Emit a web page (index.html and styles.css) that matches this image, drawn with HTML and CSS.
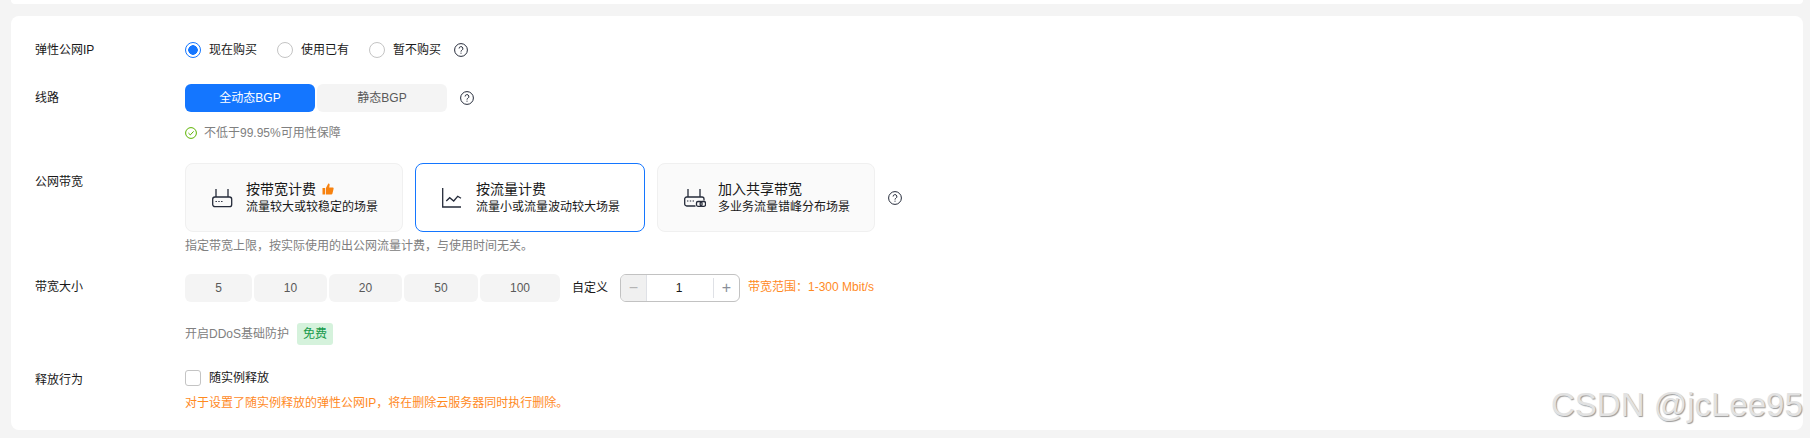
FILE: index.html
```html
<!DOCTYPE html>
<html lang="en">
<head>
    <meta charset="UTF-8">
    <title>弹性公网IP</title>
    <link rel="stylesheet" href="styles.css">
</head>
<body>
    <div class="top-card"></div>
    <div class="form-card">
        <div class="row row-ip">
            <div class="label">弹性公网IP</div>
            <div class="radio-group">
                <label class="radio checked"><span class="dot"></span>现在购买</label>
                <label class="radio"><span class="dot"></span>使用已有</label>
                <label class="radio"><span class="dot"></span>暂不购买</label>
                <svg class="help" viewBox="0 0 14 14"><circle cx="7" cy="7" r="6.4"/><path d="M5.1 5.5a1.9 1.9 0 1 1 2.8 1.7c-.6.3-.9.7-.9 1.4"/><path d="M7 9.7v1"/></svg>
            </div>
        </div>
        <div class="row row-line">
            <div class="label">线路</div>
            <div class="content">
                <div class="line-tabs">
                    <div class="line-tab active">全动态BGP</div>
                    <div class="line-tab">静态BGP</div>
                    <svg class="help line-help" viewBox="0 0 14 14"><circle cx="7" cy="7" r="6.4"/><path d="M5.1 5.5a1.9 1.9 0 1 1 2.8 1.7c-.6.3-.9.7-.9 1.4"/><path d="M7 9.7v1"/></svg>
                </div>
                <div class="tip">
                    <svg class="ok" viewBox="0 0 12 12"><circle cx="6" cy="6" r="5.4"/><path d="M3.4 6l1.9 1.9 3.3-3.5"/></svg>
                    不低于99.95%可用性保障
                </div>
            </div>
        </div>
        <div class="row row-billing">
            <div class="label">公网带宽</div>
            <div class="content">
                <div class="bill-cards">
                    <div class="bill-card">
                        <svg class="bill-icon" viewBox="0 0 22 20"><path d="M4 1v8M16 1v8"/><rect x="0.7" y="9" width="19" height="9.6" rx="2.2"/><path class="dots" d="M3.5 13.5h1.4M6.3 13.5h1.4M9.1 13.5h1.4"/></svg>
                        <div class="bill-text">
                            <div class="bill-title">按带宽计费<svg class="thumb" viewBox="0 0 12 12"><rect x="0.5" y="5" width="2.5" height="6.5"/><path d="M3.8 5.2 6.3.6c1-.2 1.5.6 1.3 1.6L7.2 4.4h3.4c.8 0 1.2.6 1 1.3l-1.2 5c-.2.6-.5.8-1.1.8H3.8z"/></svg></div>
                            <div class="bill-desc">流量较大或较稳定的场景</div>
                        </div>
                    </div>
                    <div class="bill-card selected">
                        <svg class="bill-icon" viewBox="0 0 22 20"><path d="M.7 0v19H19"/><path d="M4.3 13 7.7 9.7 11.7 13l4-4.7L19 10.3"/></svg>
                        <div class="bill-text">
                            <div class="bill-title">按流量计费</div>
                            <div class="bill-desc">流量小或流量波动较大场景</div>
                        </div>
                    </div>
                    <div class="bill-card">
                        <svg class="bill-icon" viewBox="0 0 22 20"><path d="M4 1v8M16 1v8"/><path d="M11.5 18H2.700a2 2 0 0 1-2-2v-5a2 2 0 0 1 2-2H18a2 2 0 0 1 2 2v1.5"/><path class="dots" d="M3 13h1.4M5.8 13h1.4M8.6 13h1.4"/><rect x="12.5" y="13.5" width="5.5" height="4.8" rx="1.5"/><rect x="16.2" y="13.5" width="5.3" height="4.8" rx="1.5"/></svg>
                        <div class="bill-text">
                            <div class="bill-title">加入共享带宽</div>
                            <div class="bill-desc">多业务流量错峰分布场景</div>
                        </div>
                    </div>
                    <svg class="help bill-help" viewBox="0 0 14 14"><circle cx="7" cy="7" r="6.4"/><path d="M5.1 5.5a1.9 1.9 0 1 1 2.8 1.7c-.6.3-.9.7-.9 1.4"/><path d="M7 9.7v1"/></svg>
                </div>
                <div class="hint">指定带宽上限，按实际使用的出公网流量计费，与使用时间无关。</div>
            </div>
        </div>
        <div class="row row-size">
            <div class="label">带宽大小</div>
            <div class="size-group">
                <div class="size size-5">5</div>
                <div class="size size-mid">10</div>
                <div class="size size-mid">20</div>
                <div class="size size-50">50</div>
                <div class="size size-100">100</div>
                <div class="custom">自定义</div>
                <div class="stepper">
                    <div class="step minus">−</div>
                    <div class="step-value">1</div>
                    <div class="step plus">+</div>
                </div>
                <div class="range">带宽范围：1-300 Mbit/s</div>
            </div>
        </div>
        <div class="row row-ddos">
            <div class="label"></div>
            <div class="ddos">开启DDoS基础防护<span class="free">免费</span></div>
        </div>
        <div class="row row-release">
            <div class="label">释放行为</div>
            <div class="content">
                <label class="check"><span class="box"></span>随实例释放</label>
                <div class="warn">对于设置了随实例释放的弹性公网IP，将在删除云服务器同时执行删除。</div>
            </div>
        </div>
    </div>
    <div class="watermark">CSDN @jcLee95</div>
</body>
</html>
```
FILE: styles.css
```css
* {
    box-sizing: border-box;
}
body {
    margin: 0;
    width: 1810px;
    height: 438px;
    overflow: hidden;
    position: relative;
    background-color: #f4f4f4;
    color: #191919;
    font-family: "Liberation Sans", "Noto Sans CJK SC", sans-serif;
    font-size: 12px;
    line-height: 16px;
}
.top-card {
    height: 4px;
    margin: 0 7px 0 11px;
    background-color: #fff;
    border-radius: 0 0 8px 8px;
}
.form-card {
    height: 414px;
    margin: 12px 7px 0 11px;
    padding: 24px 24px 0;
    background-color: #fff;
    border-radius: 8px;
}
.row {
    display: flex;
}
.label {
    width: 150px;
    flex: none;
}
.help {
    width: 14px;
    height: 14px;
    flex: none;
    fill: none;
    stroke: #252b3a;
    stroke-width: 1;
}

.row-ip {
    align-items: center;
    height: 20px;
}
.radio-group {
    display: flex;
    align-items: center;
}
.radio {
    display: flex;
    align-items: center;
    margin-right: 20px;
}
.radio .dot {
    width: 16px;
    height: 16px;
    margin-right: 8px;
    border: 1px solid #c4c4c4;
    border-radius: 50%;
}
.radio.checked .dot {
    border-color: #1476ff;
    background: radial-gradient(circle, #1476ff 0 4.5px, #fff 5px);
}
.radio-group .help {
    margin-left: -7px;
}

.row-line {
    margin-top: 24px;
}
.row-line .label {
    padding-top: 6px;
}
.line-tabs {
    display: flex;
    align-items: center;
    gap: 2px;
}
.line-tab {
    width: 130px;
    height: 28px;
    border-radius: 6px;
    background-color: #f4f4f4;
    color: #595959;
    text-align: center;
    line-height: 28px;
}
.line-tab.active {
    background-color: #1476ff;
    color: #fff;
}
.line-help {
    margin-left: 11px;
}
.tip {
    display: flex;
    align-items: center;
    margin-top: 13px;
    color: #808080;
}
.ok {
    width: 12px;
    height: 12px;
    margin-right: 7px;
    fill: none;
    stroke: #5cb300;
    stroke-width: 1;
}

.row-billing {
    margin-top: 22px;
}
.row-billing .label {
    padding-top: 11px;
}
.bill-cards {
    display: flex;
    align-items: center;
    gap: 12px;
}
.bill-card {
    display: flex;
    align-items: center;
    width: 218px;
    height: 69px;
    padding-left: 26px;
    border: 1px solid #f0f0f0;
    border-radius: 8px;
    background-color: #fafafa;
}
.bill-card.selected {
    width: 230px;
    border-color: #1476ff;
    background-color: #fff;
}
.bill-icon {
    width: 22px;
    height: 20px;
    margin-right: 12px;
    flex: none;
    fill: none;
    stroke: #252b3a;
    stroke-width: 1.3;
}
.bill-icon .dots {
    stroke-width: 1;
}
.bill-title {
    display: flex;
    align-items: center;
    font-size: 14px;
    line-height: 18px;
}
.bill-desc {
    margin-top: 1px;
    line-height: 17px;
}
.thumb {
    width: 12px;
    height: 12px;
    margin-left: 6px;
    fill: #f7820f;
}
.bill-help {
    margin-left: 1px;
}
.hint {
    margin-top: 6px;
    color: #808080;
}

.row-size {
    margin-top: 20px;
}
.row-size .label {
    padding-top: 5px;
}
.size-group {
    display: flex;
    align-items: center;
    gap: 2px;
}
.size {
    height: 28px;
    border-radius: 6px;
    background-color: #f4f4f4;
    color: #595959;
    text-align: center;
    line-height: 28px;
}
.size-5 {
    width: 67px;
}
.size-mid {
    width: 73px;
}
.size-50 {
    width: 74px;
}
.size-100 {
    width: 80px;
}
.custom {
    margin: 0 10px;
}
.stepper {
    display: flex;
    width: 120px;
    height: 28px;
    border: 1px solid #c2c2c2;
    border-radius: 6px;
    overflow: hidden;
}
.step {
    width: 26px;
    color: #8a8e99;
    font-size: 16px;
    line-height: 26px;
    text-align: center;
}
.minus {
    background-color: #f0f0f0;
    border-right: 1px solid #dfe1e6;
    color: #b4b4b4;
}
.plus {
    margin: 3px 0;
    border-left: 1px solid #dfe1e6;
    line-height: 20px;
}
.step-value {
    flex: 1;
    padding-right: 2px;
    text-align: center;
    line-height: 26px;
}
.range {
    margin: 0 0 2px 6px;
    color: #ff8a1f;
}

.row-ddos {
    margin-top: 21px;
    align-items: center;
}
.ddos {
    display: flex;
    align-items: center;
    color: #808080;
}
.free {
    width: 36px;
    height: 22px;
    margin-left: 8px;
    border-radius: 3px;
    background-color: #d5f2dc;
    color: #159a4b;
    text-align: center;
    line-height: 22px;
}

.row-release {
    margin-top: 25px;
}
.row-release .label {
    padding-top: 2px;
}
.check {
    display: flex;
    align-items: center;
}
.box {
    width: 16px;
    height: 16px;
    margin-right: 8px;
    border: 1px solid #c4c4c4;
    border-radius: 3px;
}
.warn {
    margin-top: 9px;
    color: #ff8a1f;
}

.watermark {
    position: absolute;
    left: 1551px;
    top: 385px;
    color: #e2e2e2;
    font-size: 33px;
    line-height: 40px;
    white-space: nowrap;
    text-shadow: 1px 1px 1px #9a9a9a;
}
```
